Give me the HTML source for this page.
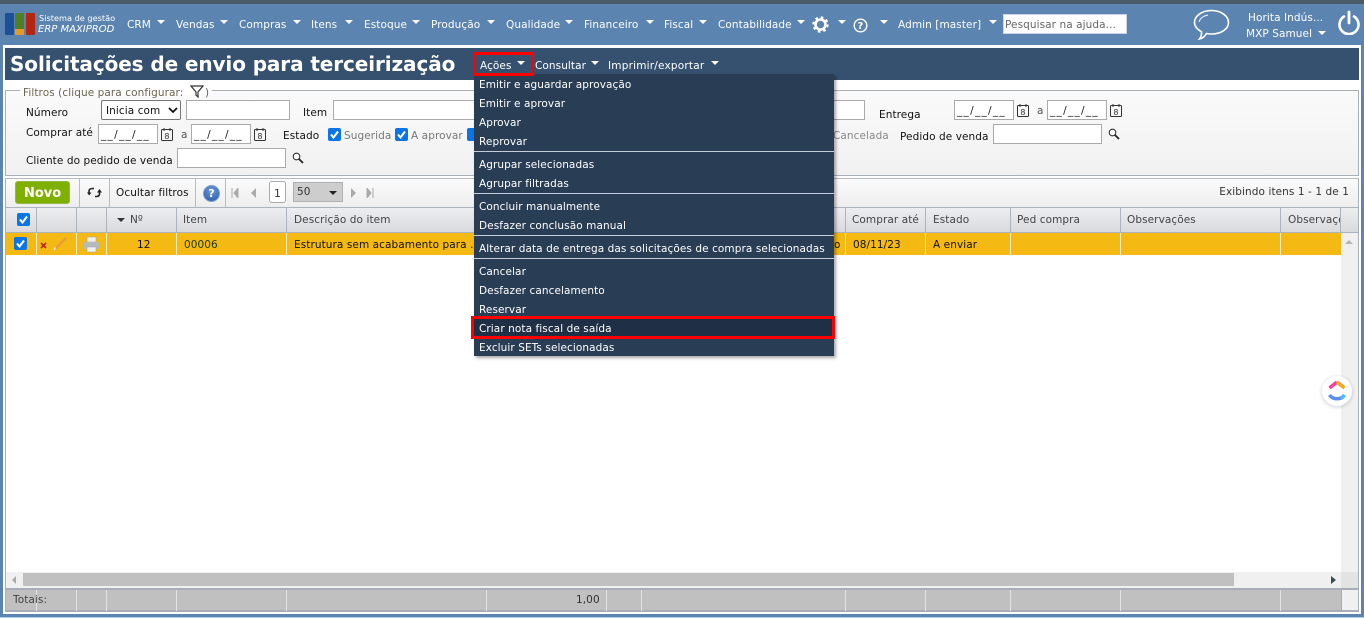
<!DOCTYPE html>
<html lang="pt"><head><meta charset="utf-8"><title>Solicitações de envio para terceirização</title>
<style>
html,body{margin:0;padding:0;width:1364px;height:618px;overflow:hidden;background:#5b84b1;font-family:"DejaVu Sans",sans-serif;font-size:10.5px;color:#111;letter-spacing:.08px}
div,span,svg{position:absolute;box-sizing:border-box}
.t{white-space:nowrap;line-height:14px;margin-top:1px}
.n{color:#fff;top:17px}
.a{width:0;height:0;border-left:4.5px solid transparent;border-right:4.5px solid transparent;border-top:4.5px solid #fff;margin-left:.5px;margin-top:.5px}
.m{color:#fff;left:479px;white-space:nowrap;line-height:14px;margin-top:1px}
.sep{left:474px;width:360px;height:1px;background:#c5ced8}
.i{background:#fff;border:1px solid #aaa;height:20px}
.d{background:#fff;border:1px solid #aaa;height:20px;width:60px;color:#222;font-size:10.5px;line-height:20px;padding-left:2px;white-space:nowrap;letter-spacing:1.3px}
.h{color:#444;top:212px}
.v{width:1px;background:#aeb4be;top:207px;height:26px}
.w{width:1px;background:#fff;top:233px;height:22px;opacity:.75}
.f{width:1px;background:#e3e3e3;top:590px;height:21px}
.c{width:13px;height:13px;background:#0b75e6;border-radius:2px}
.tb{width:1px;background:#bbb;top:179px;height:28px}
</style></head><body>
<div style="left:0;top:0;width:1364px;height:4px;background:#485b66"></div>

<!-- logo -->
<div style="left:5px;top:13px;width:9px;height:22px;background:#1c4f95;border-radius:1px"></div>
<div style="left:15px;top:13px;width:9px;height:22px;background:#4f7f22;border-radius:1px"></div>
<div style="left:15px;top:29px;width:9px;height:6px;background:#e69a22"></div>
<div style="left:26px;top:13px;width:9px;height:22px;background:#b52612;border-radius:1px"></div>
<span class="t" style="left:39px;top:10px;color:#fff;font-size:8.2px;letter-spacing:0">Sistema de gestão</span>
<span class="t" style="left:38px;top:22px;color:#fff;font-size:10px;font-style:italic;letter-spacing:0">ERP MAXIPROD</span>

<!-- nav -->
<span class="t n" style="left:127px">CRM</span><div class="a" style="left:156px;top:19px"></div>
<span class="t n" style="left:176px">Vendas</span><div class="a" style="left:219px;top:19px"></div>
<span class="t n" style="left:239px">Compras</span><div class="a" style="left:292px;top:19px"></div>
<span class="t n" style="left:311px">Itens</span><div class="a" style="left:344px;top:19px"></div>
<span class="t n" style="left:364px">Estoque</span><div class="a" style="left:411px;top:19px"></div>
<span class="t n" style="left:431px">Produção</span><div class="a" style="left:486px;top:19px"></div>
<span class="t n" style="left:506px">Qualidade</span><div class="a" style="left:564px;top:19px"></div>
<span class="t n" style="left:584px">Financeiro</span><div class="a" style="left:645px;top:19px"></div>
<span class="t n" style="left:664px">Fiscal</span><div class="a" style="left:698px;top:19px"></div>
<span class="t n" style="left:718px">Contabilidade</span><div class="a" style="left:796px;top:19px"></div>
<svg style="left:812px;top:16px" width="17" height="17" viewBox="0 0 17 17"><circle cx="8.5" cy="8.5" r="5" fill="none" stroke="#fff" stroke-width="2.6"/><circle cx="8.5" cy="8.5" r="7" fill="none" stroke="#fff" stroke-width="2.4" stroke-dasharray="2.6 2.9"/></svg>
<div class="a" style="left:837px;top:19px"></div>
<svg style="left:853px;top:18px" width="15" height="15" viewBox="0 0 15 15"><circle cx="7.5" cy="7.5" r="6.3" fill="none" stroke="#fff" stroke-width="1.4"/><text x="7.5" y="11" text-anchor="middle" fill="#fff" font-size="10" font-weight="bold" font-family="DejaVu Sans">?</text></svg>
<div class="a" style="left:879px;top:19px"></div>
<span class="t n" style="left:898px">Admin [master]</span><div class="a" style="left:988px;top:19px"></div>
<div style="left:1003px;top:14px;width:124px;height:20px;background:#fff;border:1px solid #c9d5e3"></div>
<span class="t" style="left:1005px;top:17px;color:#666">Pesquisar na ajuda...</span>
<svg style="left:1193px;top:9px" width="38" height="33" viewBox="0 0 38 33"><path d="M18.500 1.500C28 1.500 35.500 7 35.500 13.500C35.500 20 28 25 18.500 25C16.500 25 14.800 24.800 13.500 24.500C12 27 9.500 29.500 6.500 30C8 28 8.800 25.500 8.500 22.800C4.500 20.500 1.500 17.300 1.500 13.500C1.500 7 9 1.500 18.500 1.500Z" fill="none" stroke="#fff" stroke-width="1.6"/><path d="M6 13C7 9 11 6.500 15 6" fill="none" stroke="#dfe8f2" stroke-width="1.2"/></svg>
<span class="t" style="left:1248px;top:10px;color:#fff">Horita Indús...</span>
<span class="t" style="left:1246px;top:26px;color:#fff">MXP Samuel</span><div class="a" style="left:1317px;top:30px"></div>
<svg style="left:1337px;top:10px" width="24" height="25" viewBox="0 0 24 25"><path d="M7 6.500A9.500 9.500 0 1 0 17 6.500" fill="none" stroke="#fff" stroke-width="2.6" stroke-linecap="round"/><path d="M12 2V13" stroke="#fff" stroke-width="2.8" stroke-linecap="round"/></svg>

<!-- panel -->
<div style="left:3px;top:45px;width:1358px;height:569px;background:#fff"></div>
<div style="left:5px;top:48px;width:1354px;height:32px;background:#35516f"></div>
<span class="t" style="left:10px;top:51px;margin-top:0;color:#fff;font-size:20px;font-weight:bold;line-height:26px;letter-spacing:-.1px">Solicitações de envio para terceirização</span>

<span class="t" style="left:480px;top:58px;color:#fff">Ações</span><div class="a" style="left:516px;top:60px"></div>
<span class="t" style="left:535px;top:58px;color:#fff">Consultar</span><div class="a" style="left:590px;top:60px"></div>
<span class="t" style="left:608px;top:58px;color:#fff;letter-spacing:.2px">Imprimir/exportar</span><div class="a" style="left:710px;top:60px"></div>

<!-- filters -->
<div style="left:5px;top:90px;width:1354px;height:86px;border:1px solid #aab0b8;background:linear-gradient(#fafafa,#f1f1f1)"></div>
<div style="left:20px;top:86px;width:192px;height:9px;background:#fff"></div>
<span class="t" style="left:23px;top:85px;color:#6b6250">Filtros (clique para configurar:</span>
<svg style="left:190px;top:85px" width="14" height="13" viewBox="0 0 14 13"><path d="M1 1H13L8 7V12L6 10V7Z" fill="none" stroke="#333" stroke-width="1.2"/></svg>
<span class="t" style="left:205px;top:85px;color:#6b6250">)</span>

<span class="t" style="left:26px;top:105px">Número</span>
<div style="left:101px;top:100px;width:80px;height:20px;background:#fff;border:1px solid #777;border-radius:2px"></div>
<span class="t" style="left:106px;top:103px">Inicia com</span>
<svg style="left:168px;top:107px" width="10" height="7" viewBox="0 0 10 7"><path d="M1 1L5 5L9 1" fill="none" stroke="#111" stroke-width="1.8"/></svg>
<div class="i" style="left:186px;top:100px;width:104px"></div>
<span class="t" style="left:303px;top:105px">Item</span>
<div class="i" style="left:333px;top:100px;width:532px"></div>
<span class="t" style="left:879px;top:107px">Entrega</span>
<div class="d" style="left:954px;top:100px">__/__/__</div>
<svg style="left:1017px;top:104px" width="12" height="13" viewBox="0 0 12 13"><rect x=".5" y="1.500" width="11" height="11" rx="1" fill="none" stroke="#333"/><path d="M3 0V3M9 0V3" stroke="#333"/><text x="6" y="11" text-anchor="middle" font-size="8" fill="#333" font-family="DejaVu Sans">8</text></svg>
<span class="t" style="left:1037px;top:103px;color:#555">a</span>
<div class="d" style="left:1047px;top:100px">__/__/__</div>
<svg style="left:1110px;top:104px" width="12" height="13" viewBox="0 0 12 13"><rect x=".5" y="1.500" width="11" height="11" rx="1" fill="none" stroke="#333"/><path d="M3 0V3M9 0V3" stroke="#333"/><text x="6" y="11" text-anchor="middle" font-size="8" fill="#333" font-family="DejaVu Sans">8</text></svg>

<span class="t" style="left:26px;top:125px">Comprar até</span>
<div class="d" style="left:98px;top:124px">__/__/__</div>
<svg style="left:161px;top:128px" width="12" height="13" viewBox="0 0 12 13"><rect x=".5" y="1.500" width="11" height="11" rx="1" fill="none" stroke="#333"/><path d="M3 0V3M9 0V3" stroke="#333"/><text x="6" y="11" text-anchor="middle" font-size="8" fill="#333" font-family="DejaVu Sans">8</text></svg>
<span class="t" style="left:181px;top:127px;color:#555">a</span>
<div class="d" style="left:191px;top:124px">__/__/__</div>
<svg style="left:254px;top:128px" width="12" height="13" viewBox="0 0 12 13"><rect x=".5" y="1.500" width="11" height="11" rx="1" fill="none" stroke="#333"/><path d="M3 0V3M9 0V3" stroke="#333"/><text x="6" y="11" text-anchor="middle" font-size="8" fill="#333" font-family="DejaVu Sans">8</text></svg>
<span class="t" style="left:283px;top:128px">Estado</span>
<div class="c" style="left:328px;top:128px"><svg style="left:0;top:0" width="13" height="13" viewBox="0 0 13 13"><path d="M3 6.500L5.500 9.500L10 3.500" fill="none" stroke="#fff" stroke-width="2"/></svg></div>
<span class="t" style="left:344px;top:128px;color:#777">Sugerida</span>
<div class="c" style="left:395px;top:128px"><svg style="left:0;top:0" width="13" height="13" viewBox="0 0 13 13"><path d="M3 6.500L5.500 9.500L10 3.500" fill="none" stroke="#fff" stroke-width="2"/></svg></div>
<span class="t" style="left:411px;top:128px;color:#777">A aprovar</span>
<div class="c" style="left:467px;top:128px"></div>
<span class="t" style="left:833px;top:128px;color:#888">Cancelada</span>
<span class="t" style="left:900px;top:129px">Pedido de venda</span>
<div class="i" style="left:993px;top:124px;width:109px"></div>
<svg style="left:1108px;top:128px" width="12" height="12" viewBox="0 0 12 12"><circle cx="4.500" cy="4.500" r="3.300" fill="#fff" stroke="#333" stroke-width="1.100"/><path d="M7 7L11 11" stroke="#222" stroke-width="1.800"/></svg>
<span class="t" style="left:26px;top:153px">Cliente do pedido de venda</span>
<div class="i" style="left:177px;top:148px;width:109px"></div>
<svg style="left:292px;top:152px" width="12" height="12" viewBox="0 0 12 12"><circle cx="4.500" cy="4.500" r="3.300" fill="#fff" stroke="#333" stroke-width="1.100"/><path d="M7 7L11 11" stroke="#222" stroke-width="1.800"/></svg>

<!-- toolbar -->
<div style="left:5px;top:178px;width:1354px;height:29px;border-top:1px solid #b5bac0;border-left:1px solid #aab0b8;border-right:1px solid #aab0b8;background:linear-gradient(#fbfbfb,#eeeeee)"></div>
<div style="left:15px;top:181px;width:55px;height:23px;background:#7fb000;border-radius:3px;border:1px solid #93b84a"></div>
<span class="t" style="left:24px;top:186px;color:#fff;font-weight:bold;font-size:13px;letter-spacing:0">Novo</span>
<div class="tb" style="left:79px"></div><div class="tb" style="left:109px"></div><div class="tb" style="left:195px"></div><div class="tb" style="left:225px"></div>
<svg style="left:87px;top:186px" width="15" height="13" viewBox="0 0 15 13"><path d="M2 8V5C2 3 4 2.500 6 2.500H7M12.500 5V8C12.500 10 10.500 10.500 9 10.500H8" fill="none" stroke="#222" stroke-width="1.600"/><path d="M0 6.500H4.500L2.200 9.500ZM15 6.500H10L12.500 3Z" fill="#222"/></svg>
<span class="t" style="left:116px;top:185px">Ocultar filtros</span>
<div style="left:203px;top:185px;width:17px;height:17px;border-radius:50%;background:radial-gradient(circle at 50% 30%,#6e9bd8,#2657a8);border:1px solid #7fa0cc"></div>
<span class="t" style="left:203px;top:186px;width:17px;text-align:center;color:#fff;font-weight:bold;font-size:11px">?</span>
<svg style="left:231px;top:188px" width="8" height="10" viewBox="0 0 8 10"><path d="M1 0V10M7 0V10L3 5Z" stroke="#aaa" fill="#aaa"/></svg>
<svg style="left:250px;top:188px" width="7" height="10" viewBox="0 0 7 10"><path d="M6 0V10L1 5Z" fill="#aaa"/></svg>
<div style="left:269px;top:181px;width:17px;height:22px;background:#fff;border:1px solid #aaa;border-radius:3px"></div>
<span class="t" style="left:269px;top:186px;width:17px;text-align:center;color:#333">1</span>
<div style="left:293px;top:182px;width:50px;height:20px;background:#cdcdcd;border:1px solid #b0b0b0"></div>
<span class="t" style="left:297px;top:184px;color:#333">50</span>
<div style="left:329px;top:191px;width:0;height:0;border-left:4px solid transparent;border-right:4px solid transparent;border-top:4px solid #222"></div>
<svg style="left:350px;top:188px" width="7" height="10" viewBox="0 0 7 10"><path d="M1 0V10L6 5Z" fill="#aaa"/></svg>
<svg style="left:366px;top:188px" width="8" height="10" viewBox="0 0 8 10"><path d="M7 0V10M1 0V10L5 5Z" stroke="#aaa" fill="#aaa"/></svg>
<span class="t" style="right:15px;top:184px;color:#333">Exibindo itens 1 - 1 de 1</span>

<!-- grid -->
<div style="left:5px;top:207px;width:1354px;height:26px;background:linear-gradient(#eceef0,#d8dade);border-top:1px solid #aeb4be;border-bottom:1px solid #aeb4be"></div>
<div style="left:5px;top:207px;width:1px;height:405px;background:#aab0b8"></div>
<div style="left:1358px;top:207px;width:1px;height:405px;background:#aab0b8"></div>
<div class="v" style="left:36px"></div><div class="v" style="left:76px"></div><div class="v" style="left:106px"></div><div class="v" style="left:176px"></div><div class="v" style="left:286px"></div><div class="v" style="left:845px"></div><div class="v" style="left:925px"></div><div class="v" style="left:1010px"></div><div class="v" style="left:1120px"></div><div class="v" style="left:1280px"></div><div class="v" style="left:1340px"></div>
<div class="c" style="left:17px;top:213px"><svg style="left:0;top:0" width="13" height="13" viewBox="0 0 13 13"><path d="M3 6.500L5.500 9.500L10 3.500" fill="none" stroke="#fff" stroke-width="2"/></svg></div>
<div style="left:117px;top:218px;width:0;height:0;border-left:4px solid transparent;border-right:4px solid transparent;border-top:4px solid #333"></div>
<span class="t h" style="left:130px">Nº</span>
<span class="t h" style="left:183px">Item</span>
<span class="t h" style="left:294px">Descrição do item</span>
<span class="t h" style="left:852px">Comprar até</span>
<span class="t h" style="left:933px">Estado</span>
<span class="t h" style="left:1017px">Ped compra</span>
<span class="t h" style="left:1127px">Observações</span>
<div style="left:1288px;top:212px;width:52px;height:16px;overflow:hidden"><span class="t" style="left:0;top:0;color:#444">Observações</span></div>

<div style="left:6px;top:233px;width:1335px;height:22px;background:#f5b914"></div>
<div class="w" style="left:36px"></div><div class="w" style="left:76px"></div><div class="w" style="left:106px"></div><div class="w" style="left:176px"></div><div class="w" style="left:286px"></div><div class="w" style="left:845px"></div><div class="w" style="left:925px"></div><div class="w" style="left:1010px"></div><div class="w" style="left:1120px"></div><div class="w" style="left:1280px"></div>
<div class="c" style="left:14px;top:237px"><svg style="left:0;top:0" width="13" height="13" viewBox="0 0 13 13"><path d="M3 6.500L5.500 9.500L10 3.500" fill="none" stroke="#fff" stroke-width="2"/></svg></div>
<svg style="left:40px;top:242px" width="7" height="7" viewBox="0 0 7 7"><path d="M1 1L6 6M6 1L1 6" stroke="#c02a10" stroke-width="1.700"/></svg>
<svg style="left:53px;top:236px" width="15" height="15" viewBox="0 0 15 15"><path d="M2.500 12.500L13 2" stroke="#e89a45" stroke-width="2.200"/><path d="M1 14L2.500 11.500" stroke="#fff2d0" stroke-width="1.300"/></svg>
<svg style="left:83px;top:236px" width="17" height="17" viewBox="0 0 17 17"><rect x="4" y="1" width="9" height="5" fill="#eee" stroke="#aaa" stroke-width=".6"/><rect x="1" y="6" width="15" height="7" rx="1.500" fill="#b5babd"/><rect x="4" y="11" width="9" height="5" fill="#f2f2f2" stroke="#aaa" stroke-width=".6"/></svg>
<span class="t" style="left:137px;top:237px">12</span>
<span class="t" style="left:184px;top:237px;color:#1a3a10">00006</span>
<span class="t" style="left:294px;top:237px">Estrutura sem acabamento para ...</span>
<span class="t" style="left:834px;top:237px">o</span>
<span class="t" style="left:853px;top:237px">08/11/23</span>
<span class="t" style="left:933px;top:237px">A enviar</span>

<!-- scrollbars -->
<div style="left:1341px;top:233px;width:17px;height:339px;background:#f0f0f0"></div>
<div style="left:1345px;top:240px;width:0;height:0;border-left:4px solid transparent;border-right:4px solid transparent;border-bottom:4px solid #b5b5b5"></div>
<div style="left:6px;top:572px;width:1335px;height:16px;background:#f0f0f0"></div>
<div style="left:23px;top:573px;width:1211px;height:13px;background:#c0c0c0"></div>
<div style="left:12px;top:576px;width:0;height:0;border-top:4px solid transparent;border-bottom:4px solid transparent;border-right:4px solid #aaa"></div>
<div style="left:1331px;top:576px;width:0;height:0;border-top:4px solid transparent;border-bottom:4px solid transparent;border-left:5px solid #3a4a55"></div>
<div style="left:1341px;top:572px;width:17px;height:16px;background:#e3e3e3"></div>

<!-- totals -->
<div style="left:6px;top:588px;width:1335px;height:24px;background:#c0c0c0;border-top:2px solid #a9adb8;border-bottom:2px solid #a9adb8"></div>
<div style="left:1341px;top:588px;width:17px;height:24px;background:#f0f0f2;border-top:2px solid #a9adb8;border-bottom:2px solid #a9adb8;border-left:1px solid #a9adb8"></div>
<div class="f" style="left:36px"></div><div class="f" style="left:76px"></div><div class="f" style="left:106px"></div><div class="f" style="left:176px"></div><div class="f" style="left:286px"></div><div class="f" style="left:486px"></div><div class="f" style="left:606px"></div><div class="f" style="left:641px"></div><div class="f" style="left:845px"></div><div class="f" style="left:925px"></div><div class="f" style="left:1010px"></div><div class="f" style="left:1120px"></div><div class="f" style="left:1280px"></div>
<span class="t" style="left:13px;top:592px;color:#444">Totais:</span>
<span class="t" style="left:576px;top:592px;color:#333">1,00</span>
<div style="left:0;top:617px;width:1364px;height:1px;background:#a9cfe4"></div>

<!-- clickup -->
<div style="left:1322px;top:376px;width:30px;height:30px;border-radius:50%;background:#fff;box-shadow:0 1px 4px rgba(0,0,0,.2)"></div>
<svg style="left:1327px;top:379px" width="20" height="24" viewBox="0 0 20 24"><path d="M2.500 9L10 3" stroke="#fc3f9c" stroke-width="3.600"/><path d="M10 3L17.500 9" stroke="#f5a623" stroke-width="3.600"/><path d="M2.500 16C6 21 14 21 17.500 16" fill="none" stroke="#5b8def" stroke-width="3.600"/><path d="M14 19.300C15.500 18.500 16.700 17.300 17.500 16" fill="none" stroke="#55bdf5" stroke-width="3.600"/></svg>

<!-- dropdown -->
<div style="left:474px;top:74px;width:360px;height:282px;background:#293d55;box-shadow:2px 2px 3px rgba(0,0,0,.35)"></div>
<span class="m" style="top:77px">Emitir e aguardar aprovação</span>
<span class="m" style="top:96px">Emitir e aprovar</span>
<span class="m" style="top:115px">Aprovar</span>
<span class="m" style="top:134px">Reprovar</span>
<div class="sep" style="top:151px"></div>
<span class="m" style="top:157px">Agrupar selecionadas</span>
<span class="m" style="top:176px">Agrupar filtradas</span>
<div class="sep" style="top:193px"></div>
<span class="m" style="top:199px">Concluir manualmente</span>
<span class="m" style="top:218px">Desfazer conclusão manual</span>
<div class="sep" style="top:235px"></div>
<span class="m" style="top:241px">Alterar data de entrega das solicitações de compra selecionadas</span>
<div class="sep" style="top:258px"></div>
<span class="m" style="top:264px">Cancelar</span>
<span class="m" style="top:283px">Desfazer cancelamento</span>
<span class="m" style="top:302px">Reservar</span>
<div style="left:471px;top:316px;width:364px;height:23px;background:#1f2f45;border:3px solid #f00"></div>
<span class="m" style="top:321px">Criar nota fiscal de saída</span>
<span class="m" style="top:340px">Excluir SETs selecionadas</span>

<!-- Ações red box -->
<div style="left:473px;top:52px;width:61px;height:24px;border:3px solid #f00"></div>
</body></html>
